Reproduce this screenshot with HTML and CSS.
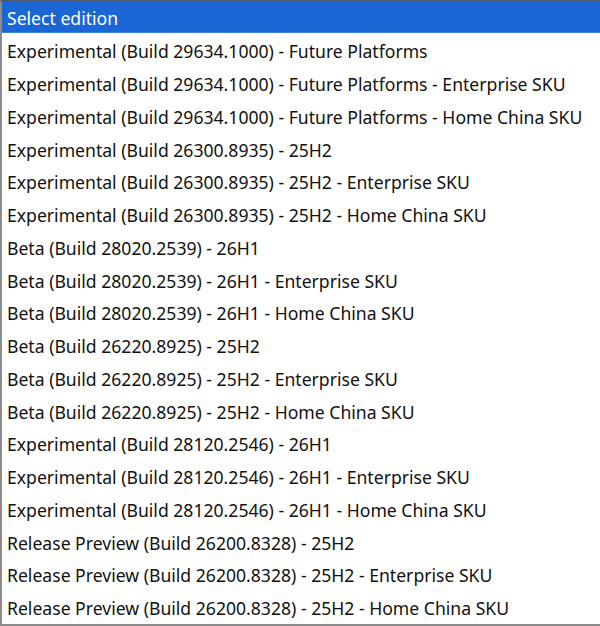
FILE: index.html
```html
<!DOCTYPE html>
<html>
<head>
<meta charset="utf-8">
<link rel="stylesheet" href="styles.css">
</head>
<body>
<div class="list">
  <div class="item selected">Select edition</div>
  <div class="item">Experimental (Build 29634.1000) - Future Platforms</div>
  <div class="item">Experimental (Build 29634.1000) - Future Platforms - Enterprise SKU</div>
  <div class="item">Experimental (Build 29634.1000) - Future Platforms - Home China SKU</div>
  <div class="item">Experimental (Build 26300.8935) - 25H2</div>
  <div class="item">Experimental (Build 26300.8935) - 25H2 - Enterprise SKU</div>
  <div class="item">Experimental (Build 26300.8935) - 25H2 - Home China SKU</div>
  <div class="item">Beta (Build 28020.2539) - 26H1</div>
  <div class="item">Beta (Build 28020.2539) - 26H1 - Enterprise SKU</div>
  <div class="item">Beta (Build 28020.2539) - 26H1 - Home China SKU</div>
  <div class="item">Beta (Build 26220.8925) - 25H2</div>
  <div class="item">Beta (Build 26220.8925) - 25H2 - Enterprise SKU</div>
  <div class="item">Beta (Build 26220.8925) - 25H2 - Home China SKU</div>
  <div class="item">Experimental (Build 28120.2546) - 26H1</div>
  <div class="item">Experimental (Build 28120.2546) - 26H1 - Enterprise SKU</div>
  <div class="item">Experimental (Build 28120.2546) - 26H1 - Home China SKU</div>
  <div class="item">Release Preview (Build 26200.8328) - 25H2</div>
  <div class="item">Release Preview (Build 26200.8328) - 25H2 - Enterprise SKU</div>
  <div class="item">Release Preview (Build 26200.8328) - 25H2 - Home China SKU</div>
</div>
</body>
</html>
```
FILE: styles.css
```css
html, body {
  margin: 0;
  padding: 0;
  background: #ffffff;
}
.list {
  width: 600px;
  height: 626px;
  box-sizing: border-box;
  border-top: 2px solid #4f5b6b;
  border-left: 2px solid #8c8c8c;
  border-bottom: 2px solid #8c8c8c;
  display: flex;
  flex-direction: column;
  font-family: "Noto Sans", "Open Sans", sans-serif;
  font-size: 17.6px;
  color: #111111;
  overflow: hidden;
}
.item {
  height: 32.75px;
  flex: 0 0 32.75px;
  box-sizing: border-box;
  display: flex;
  align-items: center;
  padding-left: 5px;
  padding-top: 4px;
  white-space: nowrap;
}
.item.selected {
  height: 31px;
  flex: 0 0 31px;
  padding-top: 2px;
  background: #1a66d4;
  color: #ffffff;
  border-bottom: 1px solid #3b82e6;
}
```
